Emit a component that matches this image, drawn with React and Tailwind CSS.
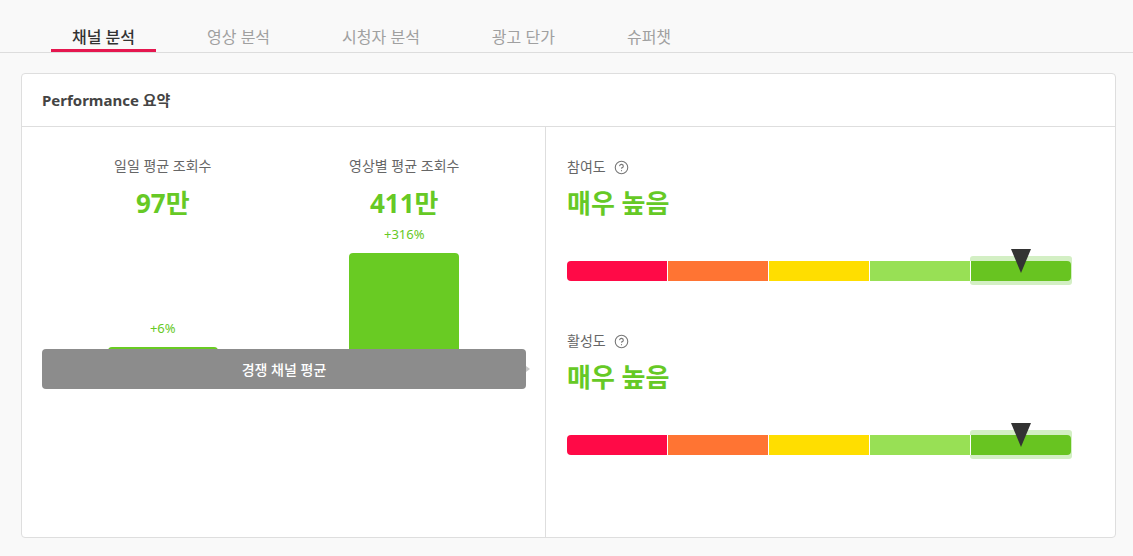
import { CircleHelp } from 'lucide-react';

const tabs = ['채널 분석', '영상 분석', '시청자 분석', '광고 단가', '슈퍼챗'];

const metrics = [
  { label: '일일 평균 조회수', value: '97만', diff: '+6%', bar: 42 },
  { label: '영상별 평균 조회수', value: '411만', diff: '+316%', bar: 136 },
];

const segments = ['#ff0a47', '#ff7433', '#ffde00', '#98e055', '#68c421'];

function Gauge({ level }) {
  // level: 0..4, marker sits over the middle of that segment
  return (
    <div className="relative mt-[41px] flex h-5 w-[504px]">
      <div
        className="absolute -top-[5px] -bottom-[4px] -right-px z-0 rounded-[3px] bg-[#d3efc4]"
        style={{ left: `${level * 20}%` }}
      />
      {segments.map((c, i) => (
        <div
          key={c}
          className={`relative z-10 h-5 flex-1 ${i > 0 ? 'border-l border-white' : ''} ${
            i === 0 ? 'rounded-l-[4px]' : ''
          } ${i === segments.length - 1 ? 'rounded-r-[4px]' : ''}`}
          style={{ background: c }}
        />
      ))}
      <svg
        className="absolute -top-[12px] z-20 -ml-[10px]"
        style={{ left: `${level * 20 + 10}%` }}
        width="20"
        height="24"
        viewBox="0 0 20 24"
      >
        <polygon points="0,0 20,0 10,24" fill="#333333" />
      </svg>
    </div>
  );
}

function Score({ label, value, level, first }) {
  return (
    <div className={first ? '' : 'mt-[50px]'}>
      <div className="flex items-center gap-2 text-[14px] leading-5 text-[#666]">
        <span>{label}</span>
        <CircleHelp size={15} strokeWidth={1.75} className="text-[#777]" />
      </div>
      <div className="mt-[9px] text-[26px] font-bold leading-[34px] text-[#66c925]">{value}</div>
      <Gauge level={level} />
    </div>
  );
}

export default function App() {
  return (
    <div
      className="min-h-[556px] bg-[#f9f9f9] pb-5"
      style={{ fontFamily: '"Noto Sans", "Noto Sans CJK KR", sans-serif' }}
    >
      {/* Tabs */}
      <div className="flex gap-[30px] border-b border-[#dddddd] pl-[51px] pt-[25px]">
        {tabs.map((t, i) => (
          <div
            key={t}
            className={`border-b-[3px] px-[21px] text-[16px] leading-6 ${
              i === 0 ? 'border-[#e5174f] font-medium text-[#333]' : 'border-transparent text-[#a0a0a0]'
            }`}
          >
            {t}
          </div>
        ))}
      </div>

      {/* Card */}
      <div className="ml-[21px] mt-[20px] h-[465px] w-[1095px] rounded-[4px] border border-[#dedede] bg-white">
        <div className="flex h-[53px] items-center border-b border-[#dedede] px-[20px] text-[15px] font-bold text-[#444]">
          Performance 요약
        </div>
        <div className="flex h-[410px]">
          {/* Left: views */}
          <div className="relative w-[524px] border-r border-[#dedede] px-[20px] pt-[29px]">
            <div className="grid grid-cols-2">
              {metrics.map((m) => (
                <div key={m.label} className="flex flex-col items-center">
                  <div className="text-[14px] leading-5 text-[#666]">{m.label}</div>
                  <div className="mt-[10px] text-[26px] font-bold leading-[34px] text-[#66c925]">{m.value}</div>
                  <div className="flex h-[169px] flex-col items-center justify-end">
                    <div className="mb-[10px] text-[13px] leading-[18px] text-[#66c925]">{m.diff}</div>
                    <div className="w-[110px] rounded-t-[4px] bg-[#69cb23]" style={{ height: m.bar }} />
                  </div>
                </div>
              ))}
            </div>
            {/* Hover tooltip */}
            <div className="absolute left-[20px] right-[19px] top-[222px] flex h-10 items-center justify-center rounded-[4px] bg-[#8c8c8c] text-[14px] font-medium text-white">
              경쟁 채널 평균
              <div className="absolute -right-[4px] top-1/2 -mt-[3px] h-0 w-0 border-y-[3px] border-l-[4px] border-y-transparent border-l-[#c8c8c8]" />
            </div>
          </div>

          {/* Right: scores */}
          <div className="flex-1 pl-[21px] pt-[30px]">
            <Score first label="참여도" value="매우 높음" level={4} />
            <Score label="활성도" value="매우 높음" level={4} />
          </div>
        </div>
      </div>
    </div>
  );
}
